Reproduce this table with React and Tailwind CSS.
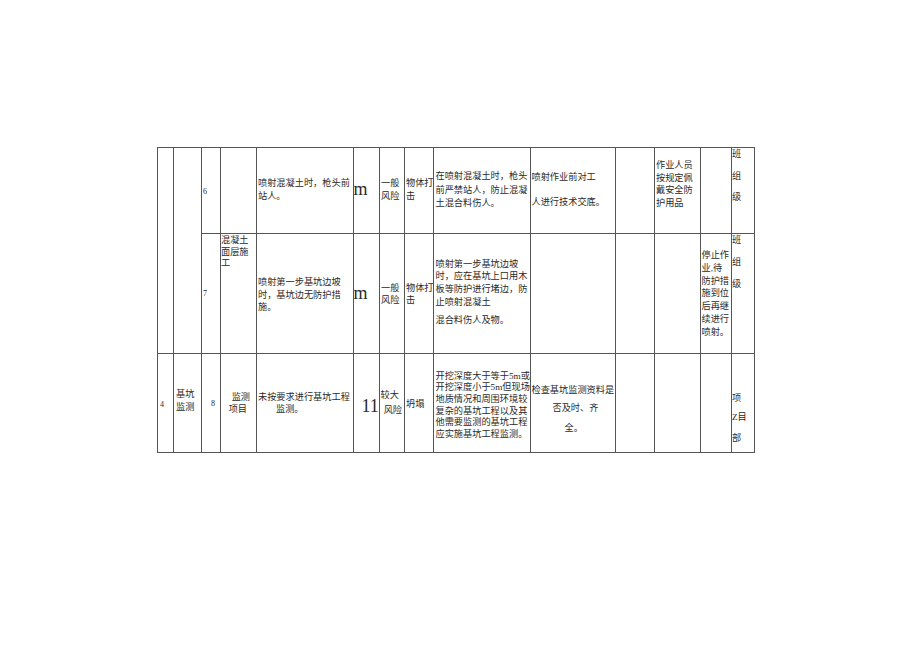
import React from "react";

const c = "border border-[#555] p-0 align-top";

export default function App() {
  return (
    <div className="min-h-[651px] w-[920px] bg-white pl-[157px] pt-[147px] font-['Liberation_Serif','Noto_Sans_CJK_SC',serif] text-[9.2px] text-[#2a2a2a]">
      <table className="w-[597px] table-fixed border-collapse">
        <colgroup>
          <col className="w-[16px]" />
          <col className="w-[27.5px]" />
          <col className="w-[19.5px]" />
          <col className="w-[36px]" />
          <col className="w-[96.5px]" />
          <col className="w-[26px]" />
          <col className="w-[25.5px]" />
          <col className="w-[29px]" />
          <col className="w-[96.5px]" />
          <col className="w-[85.5px]" />
          <col className="w-[38.5px]" />
          <col className="w-[46.5px]" />
          <col className="w-[31px]" />
          <col className="w-[23px]" />
        </colgroup>
        <tbody>
          {/* row 6 */}
          <tr className="h-[86px]">
            <td rowSpan={2} className={c}></td>
            <td rowSpan={2} className={c}></td>
            <td className={c}>
              <div className="pl-[1.5px] pt-[39px] text-[8px] leading-[10px] text-[#2a2a2a]">6</div>
            </td>
            <td className={c}></td>
            <td className={c}>
              <div className="whitespace-nowrap pl-[1px] pt-[29px] leading-[12.7px]">
                <div>喷射混凝土时，枪头前</div>
                <div>站人。</div>
              </div>
            </td>
            <td className={c}>
              <div className="pt-[32px] text-[18px] leading-[18px]">m</div>
            </td>
            <td className={c}>
              <div className="pl-[1.5px] pt-[29px] leading-[12.7px]">
                <div>一般</div>
                <div>风险</div>
              </div>
            </td>
            <td className={c}>
              <div className="whitespace-nowrap pl-[1px] pt-[29px] leading-[12.7px]">
                <div>物体打</div>
                <div>击</div>
              </div>
            </td>
            <td className={c}>
              <div className="whitespace-nowrap pl-[1.5px] pt-[22px] leading-[13.5px]">
                <div>在喷射混凝土时，枪头</div>
                <div>前严禁站人，防止混凝</div>
                <div>土混合料伤人。</div>
              </div>
            </td>
            <td className={c}>
              <div className="whitespace-nowrap pl-[1px] pt-[17px] leading-[25px]">
                <div>喷射作业前对工</div>
                <div>人进行技术交底。</div>
              </div>
            </td>
            <td className={c}></td>
            <td className={c}>
              <div className="whitespace-nowrap pl-[1.5px] pt-[11px] leading-[12.6px]">
                <div>作业人员</div>
                <div>按规定佩</div>
                <div>戴安全防</div>
                <div>护用品</div>
              </div>
            </td>
            <td className={c}></td>
            <td className={c}>
              <div className="pt-[0px] leading-[12px]">
                <div>班</div>
                <div className="mt-[10px]">组</div>
                <div className="mt-[9px]">级</div>
              </div>
            </td>
          </tr>

          {/* row 7 */}
          <tr className="h-[120px]">
            <td className={c}>
              <div className="pl-[1.5px] pt-[55px] text-[8px] leading-[10px] text-[#2a2a2a]">7</div>
            </td>
            <td className={c}>
              <div className="whitespace-nowrap pt-[1px] leading-[11.7px]">
                <div>混凝土</div>
                <div>面层施</div>
                <div>工</div>
              </div>
            </td>
            <td className={c}>
              <div className="whitespace-nowrap pl-[1px] pt-[42px] leading-[12.5px]">
                <div>喷射第一步基坑边坡</div>
                <div>时，基坑边无防护措</div>
                <div>施。</div>
              </div>
            </td>
            <td className={c}>
              <div className="pt-[50px] text-[18px] leading-[18px]">m</div>
            </td>
            <td className={c}>
              <div className="pl-[1.5px] pt-[47.5px] leading-[12.7px]">
                <div>一般</div>
                <div>风险</div>
              </div>
            </td>
            <td className={c}>
              <div className="whitespace-nowrap pl-[1px] pt-[47.5px] leading-[12.7px]">
                <div>物体打</div>
                <div>击</div>
              </div>
            </td>
            <td className={c}>
              <div className="whitespace-nowrap pl-[1.5px] pt-[23.5px] leading-[12.8px]">
                <div>喷射第一步基坑边坡</div>
                <div>时，应在基坑上口用木</div>
                <div>板等防护进行堵边，防</div>
                <div>止喷射混凝土</div>
                <div className="mt-[5.5px]">混合料伤人及物。</div>
              </div>
            </td>
            <td className={c}></td>
            <td className={c}></td>
            <td className={c}></td>
            <td className={c}>
              <div className="whitespace-nowrap pl-[0.5px] pt-[15px] leading-[12.8px]">
                <div>停止作</div>
                <div>业,待</div>
                <div>防护措</div>
                <div>施到位</div>
                <div>后再继</div>
                <div>续进行</div>
                <div>喷射。</div>
              </div>
            </td>
            <td className={c}>
              <div className="pt-[0px] leading-[12px]">
                <div>班</div>
                <div className="mt-[10px]">组</div>
                <div className="mt-[10px]">级</div>
              </div>
            </td>
          </tr>

          {/* row 8 */}
          <tr className="h-[99px]">
            <td className={c}>
              <div className="pl-[2px] pt-[45.5px] text-[8px] leading-[10px]">4</div>
            </td>
            <td className={c}>
              <div className="pl-[2px] pt-[34px] leading-[13.4px]">
                <div>基坑</div>
                <div>监测</div>
              </div>
            </td>
            <td className={c}>
              <div className="pr-[5px] pt-[44.5px] text-right text-[8px] leading-[10px]">8</div>
            </td>
            <td className={c}>
              <div className="whitespace-nowrap pr-[6px] pt-[36.5px] text-right leading-[12.6px]">
                <div>监测</div>
                <div className="mr-[3px]">项目</div>
              </div>
            </td>
            <td className={c}>
              <div className="whitespace-nowrap pl-[1px] pt-[36.5px] leading-[12.6px]">
                <div>未按要求进行基坑工程</div>
                <div className="pl-[18px]">监测。</div>
              </div>
            </td>
            <td className={c}>
              <div className="pl-[8px] pt-[43px] text-[18px] leading-[18px]">11</div>
            </td>
            <td className={c}>
              <div className="whitespace-nowrap pt-[34.3px] leading-[14.7px]">
                <div className="pl-[1px]">较大</div>
                <div className="pr-[2px] text-right">风险</div>
              </div>
            </td>
            <td className={c}>
              <div className="pl-[1px] pt-[43.5px] leading-[12px]">坍塌</div>
            </td>
            <td className={c}>
              <div className="whitespace-nowrap pl-[1.5px] pt-[16.5px] leading-[11.7px]">
                <div>开挖深度大于等于5m或</div>
                <div>开挖深度小于5m但现场</div>
                <div>地质情况和周围环境较</div>
                <div>复杂的基坑工程以及其</div>
                <div>他需要监测的基坑工程</div>
                <div>应实施基坑工程监测。</div>
              </div>
            </td>
            <td className={c}>
              <div className="whitespace-nowrap pl-[1px] pt-[29.5px] leading-[12px]">
                <div>检查基坑监测资料是</div>
                <div className="mt-[6.4px] pl-[21px]">否及时、齐</div>
                <div className="mt-[8px] pl-[33px]">全。</div>
              </div>
            </td>
            <td className={c}></td>
            <td className={c}></td>
            <td className={c}></td>
            <td className={c}>
              <div className="whitespace-nowrap pt-[38px] leading-[12px]">
                <div>项</div>
                <div className="mt-[7.3px]">Z目</div>
                <div className="mt-[8.7px]">部</div>
              </div>
            </td>
          </tr>
        </tbody>
      </table>
    </div>
  );
}
